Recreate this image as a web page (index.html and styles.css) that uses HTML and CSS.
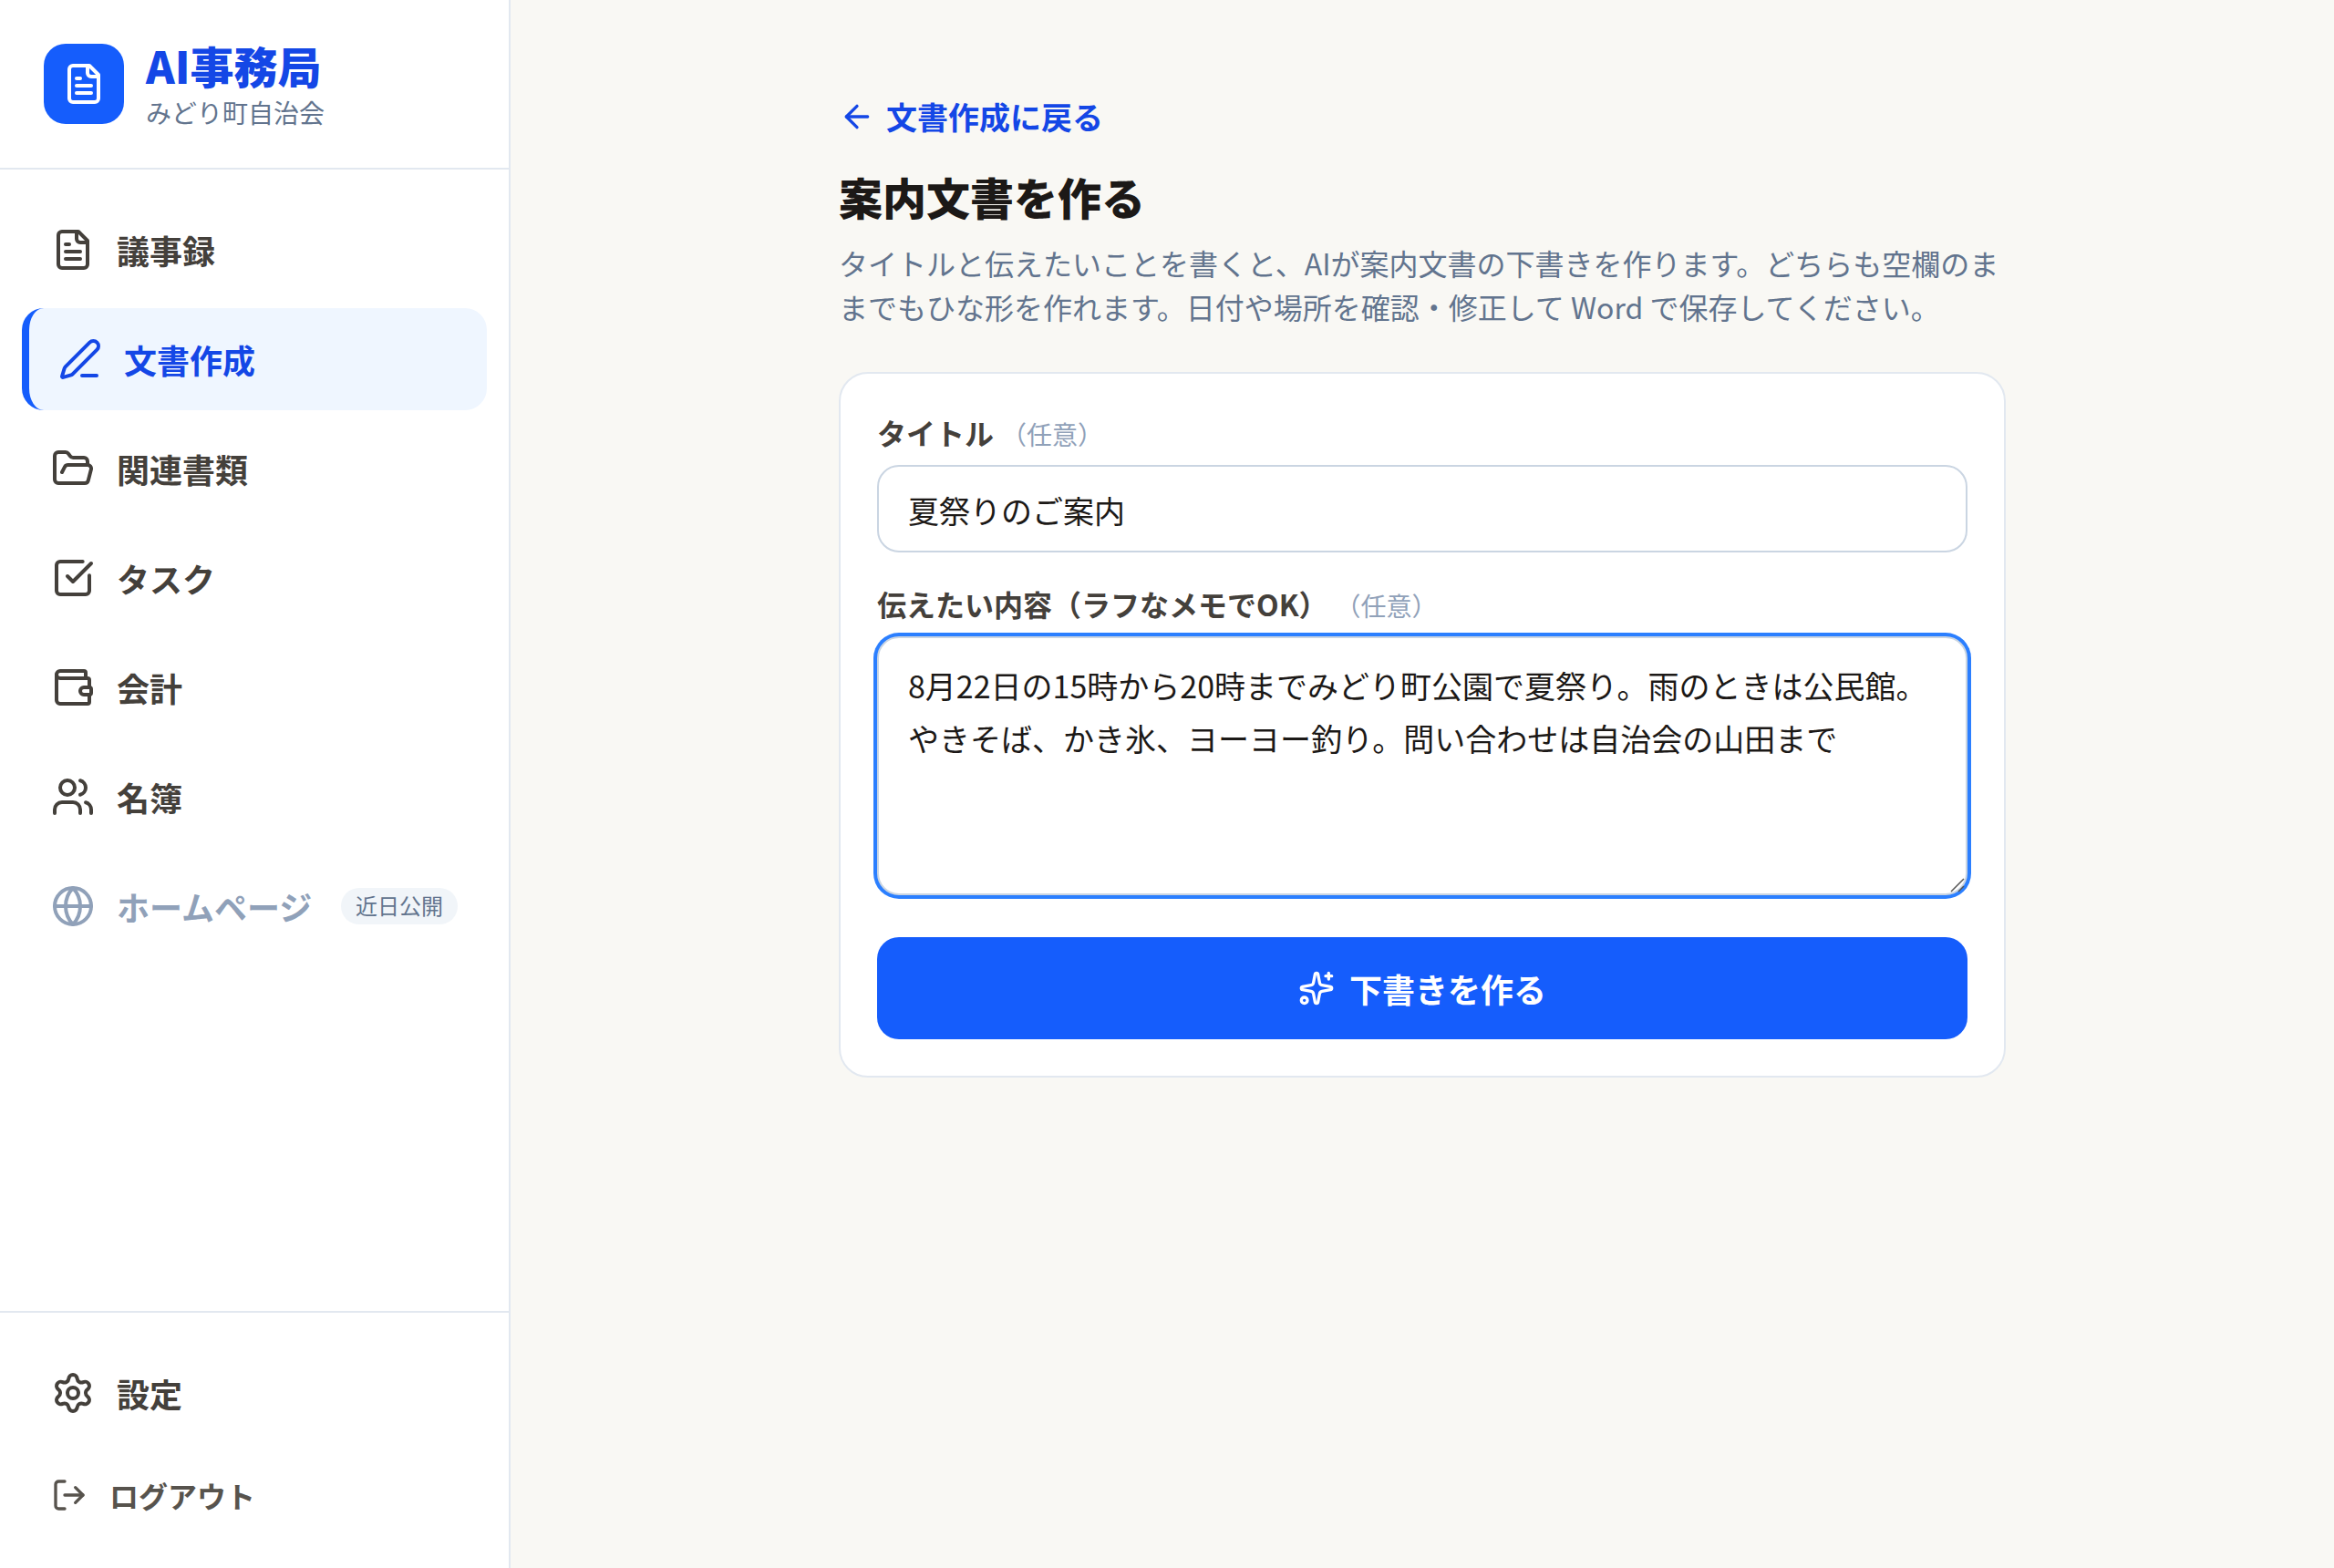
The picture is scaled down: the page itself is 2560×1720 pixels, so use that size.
FILE: index.html
```html
<!DOCTYPE html>
<html lang="ja">
<head>
<meta charset="UTF-8">
<title>案内文書を作る | AI事務局</title>
<link rel="stylesheet" href="styles.css">
</head>
<body>
    <div class="layout">
        <!-- Sidebar -->
        <aside class="sidebar">
            <div class="brand">
                <div class="brand-logo">
                    <svg class="icon" viewBox="0 0 24 24"><path d="M15 2H6a2 2 0 0 0-2 2v16a2 2 0 0 0 2 2h12a2 2 0 0 0 2-2V7Z"/><path d="M14 2v4a2 2 0 0 0 2 2h4"/><path d="M10 9H8"/><path d="M16 13H8"/><path d="M16 17H8"/></svg>
                </div>
                <div class="brand-text">
                    <p class="brand-name">AI事務局</p>
                    <p class="brand-org">みどり町自治会</p>
                </div>
            </div>

            <nav class="nav">
                <a class="nav-item">
                    <svg class="icon" viewBox="0 0 24 24"><path d="M15 2H6a2 2 0 0 0-2 2v16a2 2 0 0 0 2 2h12a2 2 0 0 0 2-2V7Z"/><path d="M14 2v4a2 2 0 0 0 2 2h4"/><path d="M10 9H8"/><path d="M16 13H8"/><path d="M16 17H8"/></svg>
                    <span class="nav-label">議事録</span>
                </a>
                <a class="nav-item active">
                    <svg class="icon" viewBox="0 0 24 24"><path d="M13 21h8"/><path d="M21.174 6.812a1 1 0 0 0-3.986-3.987L3.842 16.174a2 2 0 0 0-.5.83l-1.321 4.352a.5.5 0 0 0 .623.622l4.353-1.32a2 2 0 0 0 .83-.497z"/></svg>
                    <span class="nav-label">文書作成</span>
                </a>
                <a class="nav-item">
                    <svg class="icon" viewBox="0 0 24 24"><path d="m6 14 1.5-2.9A2 2 0 0 1 9.24 10H20a2 2 0 0 1 1.94 2.5l-1.54 6a2 2 0 0 1-1.95 1.5H4a2 2 0 0 1-2-2V5a2 2 0 0 1 2-2h3.9a2 2 0 0 1 1.69.9l.81 1.2a2 2 0 0 0 1.67.9H18a2 2 0 0 1 2 2v2"/></svg>
                    <span class="nav-label">関連書類</span>
                </a>
                <a class="nav-item">
                    <svg class="icon" viewBox="0 0 24 24"><path d="M21 10.656V19a2 2 0 0 1-2 2H5a2 2 0 0 1-2-2V5a2 2 0 0 1 2-2h12.344"/><path d="m9 11 3 3L22 4"/></svg>
                    <span class="nav-label">タスク</span>
                </a>
                <a class="nav-item">
                    <svg class="icon" viewBox="0 0 24 24"><path d="M19 7V4a1 1 0 0 0-1-1H5a2 2 0 0 0 0 4h15a1 1 0 0 1 1 1v4h-3a2 2 0 0 0 0 4h3a1 1 0 0 0 1-1v-2a1 1 0 0 0-1-1"/><path d="M3 5v14a2 2 0 0 0 2 2h15a1 1 0 0 0 1-1v-4"/></svg>
                    <span class="nav-label">会計</span>
                </a>
                <a class="nav-item">
                    <svg class="icon" viewBox="0 0 24 24"><path d="M16 21v-2a4 4 0 0 0-4-4H6a4 4 0 0 0-4 4v2"/><path d="M16 3.128a4 4 0 0 1 0 7.744"/><path d="M22 21v-2a4 4 0 0 0-3-3.87"/><circle cx="9" cy="7" r="4"/></svg>
                    <span class="nav-label">名簿</span>
                </a>
                <a class="nav-item disabled">
                    <svg class="icon" viewBox="0 0 24 24"><circle cx="12" cy="12" r="10"/><path d="M12 2a14.5 14.5 0 0 0 0 20 14.5 14.5 0 0 0 0-20"/><path d="M2 12h20"/></svg>
                    <span class="nav-label">ホームページ</span>
                    <span class="badge">近日公開</span>
                </a>
            </nav>

            <div class="sidebar-footer">
                <a class="nav-item">
                    <svg class="icon" viewBox="0 0 24 24"><path d="M9.671 4.136a2.34 2.34 0 0 1 4.659 0 2.34 2.34 0 0 0 3.319 1.915 2.34 2.34 0 0 1 2.33 4.033 2.34 2.34 0 0 0 0 3.831 2.34 2.34 0 0 1-2.33 4.033 2.34 2.34 0 0 0-3.319 1.915 2.34 2.34 0 0 1-4.659 0 2.34 2.34 0 0 0-3.32-1.915 2.34 2.34 0 0 1-2.33-4.033 2.34 2.34 0 0 0 0-3.831A2.34 2.34 0 0 1 6.35 6.051a2.34 2.34 0 0 0 3.319-1.915"/><circle cx="12" cy="12" r="3"/></svg>
                    <span class="nav-label">設定</span>
                </a>
                <a class="nav-item logout">
                    <svg class="icon icon-sm" viewBox="0 0 24 24"><path d="m16 17 5-5-5-5"/><path d="M21 12H9"/><path d="M9 21H5a2 2 0 0 1-2-2V5a2 2 0 0 1 2-2h4"/></svg>
                    <span>ログアウト</span>
                </a>
            </div>
        </aside>

        <!-- Main -->
        <main class="main">
            <div class="container">
                <a class="back-link">
                    <svg class="icon icon-sm" viewBox="0 0 24 24"><path d="m12 19-7-7 7-7"/><path d="M19 12H5"/></svg>
                    <span>文書作成に戻る</span>
                </a>
                <h1>案内文書を作る</h1>
                <p class="lead">タイトルと伝えたいことを書くと、AIが案内文書の下書きを作ります。どちらも空欄のままでもひな形を作れます。日付や場所を確認・修正して Word で保存してください。</p>

                <form class="card">
                    <label class="label" for="title">タイトル<span class="optional">（任意）</span></label>
                    <input class="input" id="title" type="text" value="夏祭りのご案内">

                    <label class="label" for="memo">伝えたい内容（ラフなメモでOK）<span class="optional">（任意）</span></label>
                    <div class="textarea-wrap">
                        <textarea class="input textarea" id="memo">8月22日の15時から20時までみどり町公園で夏祭り。雨のときは公民館。やきそば、かき氷、ヨーヨー釣り。問い合わせは自治会の山田まで</textarea>
                        <svg class="grip" viewBox="0 0 16 16"><path d="M1 15 15 1M9 15l6-6"/></svg>
                    </div>

                    <button class="submit" type="button">
                        <svg class="icon icon-sm" viewBox="0 0 24 24"><path d="M11.017 2.814a1 1 0 0 1 1.966 0l1.051 5.558a2 2 0 0 0 1.594 1.594l5.558 1.051a1 1 0 0 1 0 1.966l-5.558 1.051a2 2 0 0 0-1.594 1.594l-1.051 5.558a1 1 0 0 1-1.966 0l-1.051-5.558a2 2 0 0 0-1.594-1.594l-5.558-1.051a1 1 0 0 1 0-1.966l5.558-1.051a2 2 0 0 0 1.594-1.594z"/><path d="M20 2v4"/><path d="M22 4h-4"/><circle cx="4" cy="20" r="2"/></svg>
                        <span>下書きを作る</span>
                    </button>
                </form>
            </div>
        </main>
    </div>
</body>
</html>
```
FILE: styles.css
```css
* {
    box-sizing: border-box;
}

body {
    margin: 0;
    font-family: "Noto Sans CJK JP", sans-serif;
    font-size: 34px;
    line-height: 1.7;
    color: #1c1917;
    background-color: #f9f8f4;
}

h1, p {
    margin: 0;
}

.layout {
    display: flex;
    height: 1720px;
}

.icon {
    width: 48px;
    height: 48px;
    flex-shrink: 0;
    fill: none;
    stroke: currentColor;
    stroke-width: 2;
    stroke-linecap: round;
    stroke-linejoin: round;
}

.icon-sm {
    width: 40px;
    height: 40px;
}

/* Sidebar */
.sidebar {
    display: flex;
    flex-direction: column;
    width: 560px;
    flex-shrink: 0;
    background-color: #fff;
    border-right: 2px solid #e2e8f0;
}

.brand {
    display: flex;
    align-items: center;
    gap: 24px;
    height: 186px;
    padding: 0 48px;
    border-bottom: 2px solid #e2e8f0;
}

.brand-logo {
    display: flex;
    align-items: center;
    justify-content: center;
    width: 88px;
    height: 88px;
    border-radius: 24px;
    background-color: #155dfc;
    color: #fff;
}

.brand-name {
    font-size: 48px;
    font-weight: 800;
    line-height: 60px;
    color: #1447e6;
}

.brand-org {
    margin-top: 2px;
    font-size: 28px;
    line-height: 40px;
    color: #62748e;
}

.nav {
    display: flex;
    flex-direction: column;
    flex: 1;
    gap: 8px;
    padding: 32px 24px;
}

.nav-item {
    display: flex;
    align-items: center;
    gap: 24px;
    height: 112px;
    padding: 0 32px;
    border-radius: 24px;
    font-size: 36px;
    font-weight: 700;
    color: #44403b;
}

.nav-label {
    padding-top: 2px;
}

.nav-item.active {
    border-left: 8px solid #155dfc;
    background-color: #eff6ff;
    color: #1447e6;
}

.nav-item.disabled {
    color: #90a1b9;
}

.badge {
    margin-left: auto;
    padding: 3px 16px 5px;
    border-radius: 20px;
    background-color: #f1f5f9;
    color: #62748e;
    font-size: 24px;
    font-weight: 400;
    line-height: 32px;
}

.sidebar-footer {
    display: flex;
    flex-direction: column;
    gap: 8px;
    padding: 32px 24px;
    border-top: 2px solid #e2e8f0;
}

.logout {
    height: 96px;
    font-size: 32px;
    color: #57534d;
}

/* Main */
.main {
    flex: 1;
    padding-top: 96px;
}

.container {
    width: 1280px;
    margin: 0 auto;
}

.back-link {
    display: flex;
    align-items: center;
    gap: 12px;
    height: 64px;
    font-weight: 700;
    color: #1447e6;
}

h1 {
    margin-top: 24px;
    font-size: 48px;
    font-weight: 800;
    line-height: 62px;
}

.lead {
    margin-top: 18px;
    font-size: 32px;
    line-height: 48px;
    color: #62748e;
}

.card {
    margin-top: 48px;
    padding: 40px;
    border: 2px solid #e2e8f0;
    border-radius: 32px;
    background-color: #fff;
}

.label {
    display: flex;
    align-items: baseline;
    height: 48px;
    margin-bottom: 12px;
    font-size: 32px;
    font-weight: 700;
    line-height: 48px;
    color: #44403b;
}

.optional {
    margin-left: 8px;
    font-size: 28px;
    font-weight: 400;
    color: #90a1b9;
}

.input {
    display: block;
    width: 100%;
    height: 96px;
    margin-bottom: 32px;
    padding: 2px 32px 0;
    border: 2px solid #cad5e2;
    border-radius: 24px;
    outline: none;
    background-color: #fff;
    color: #1c1917;
    font-family: inherit;
    font-size: 34px;
    line-height: 1.7;
}

.textarea-wrap {
    position: relative;
    margin-bottom: 46px;
}

.textarea {
    height: 284px;
    margin: 0;
    padding: 23px 32px;
    overflow: hidden;
    resize: none;
    box-shadow: 0 0 0 4px #2b7fff;
}

/* Resize handle in the corner of the memo field */
.grip {
    position: absolute;
    right: 3px;
    bottom: 3px;
    width: 16px;
    height: 16px;
    fill: none;
    stroke: #555;
    stroke-width: 1.5;
}

.submit {
    display: flex;
    align-items: center;
    justify-content: center;
    gap: 16px;
    width: 100%;
    height: 112px;
    border: none;
    border-radius: 24px;
    background-color: #155dfc;
    color: #fff;
    font-family: inherit;
    font-size: 36px;
    font-weight: 700;
}
```
